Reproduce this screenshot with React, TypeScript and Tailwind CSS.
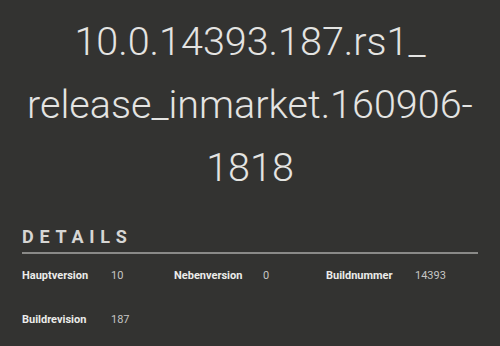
const rows = [
  [
    ['Hauptversion', '10'],
    ['Nebenversion', '0'],
    ['Buildnummer', '14393'],
  ],
  [['Buildrevision', '187']],
];

function App() {
  return (
    <div className="h-[346px] w-[500px] overflow-hidden bg-[#333331] font-['Roboto',sans-serif]">
      <h1 className="px-5 pt-[10px] text-center text-[39.5px] font-light leading-[63px] text-[#e4e4e2]">
        10.0.14393.187.rs1_<wbr />release_inmarket.160906-1818
      </h1>
      <div className="mx-[22px] mt-[27px]">
        <h2 className="border-b-2 border-[#8a8a88] pb-[4px] text-[18px] font-bold leading-[22px] tracking-[0.32em] text-[#d6d6d4]">
          DETAILS
        </h2>
        <div className="flex flex-col gap-[30px] pt-[15px]">
          {rows.map((row, i) => (
            <div key={i} className="grid grid-cols-3 leading-[14px]">
              {row.map(([label, value]) => (
                <div key={label} className="flex text-[11px]">
                  <span className="w-[89px] font-bold text-[#ececea]">{label}</span>
                  <span className="text-[#c6c6c4]">{value}</span>
                </div>
              ))}
            </div>
          ))}
        </div>
      </div>
    </div>
  );
}

export default App;
